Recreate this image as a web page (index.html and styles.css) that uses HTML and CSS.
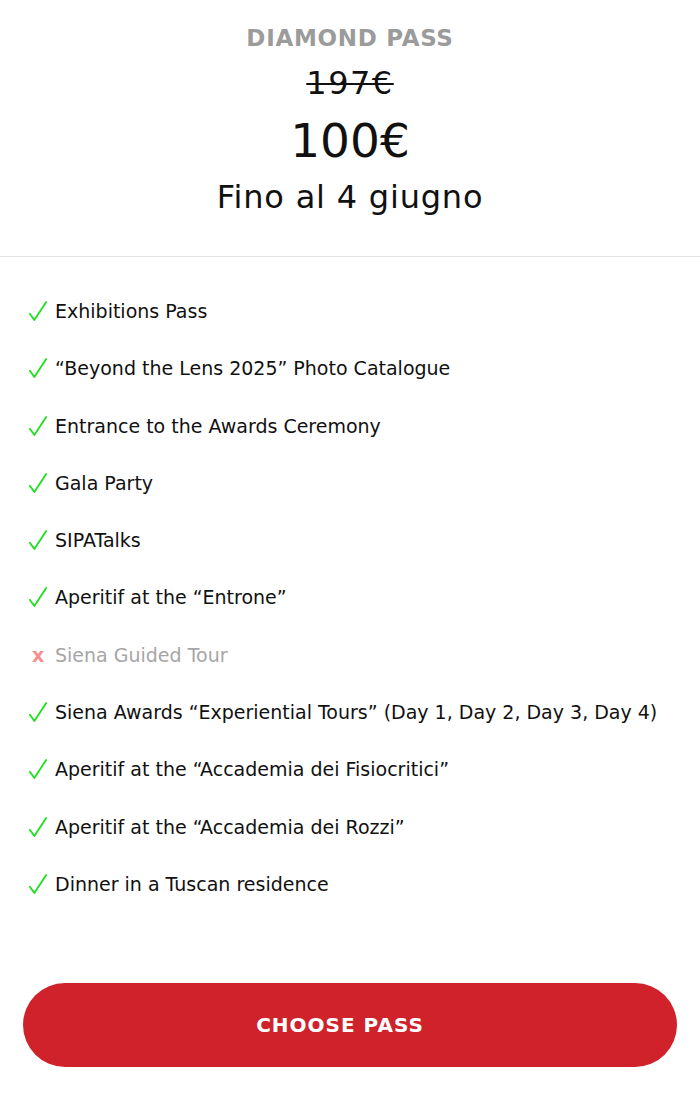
FILE: index.html
```html
<!DOCTYPE html>
<html lang="it">
<head>
<meta charset="utf-8">
<link rel="stylesheet" href="styles.css">
</head>
<body>
<div class="card">
  <header class="head">
    <div class="title">DIAMOND PASS</div>
    <div class="old">197€</div>
    <div class="price">100€</div>
    <div class="until">Fino al 4 giugno</div>
  </header>
  <ul class="features">
    <li><svg class="ok" viewBox="0 0 22 24"><path d="M2 15 L7 22 L20 2"/></svg>Exhibitions Pass</li>
    <li><svg class="ok" viewBox="0 0 22 24"><path d="M2 15 L7 22 L20 2"/></svg>“Beyond the Lens 2025” Photo Catalogue</li>
    <li><svg class="ok" viewBox="0 0 22 24"><path d="M2 15 L7 22 L20 2"/></svg>Entrance to the Awards Ceremony</li>
    <li><svg class="ok" viewBox="0 0 22 24"><path d="M2 15 L7 22 L20 2"/></svg>Gala Party</li>
    <li><svg class="ok" viewBox="0 0 22 24"><path d="M2 15 L7 22 L20 2"/></svg>SIPATalks</li>
    <li><svg class="ok" viewBox="0 0 22 24"><path d="M2 15 L7 22 L20 2"/></svg>Aperitif at the “Entrone”</li>
    <li class="off"><span class="no">x</span>Siena Guided Tour</li>
    <li><svg class="ok" viewBox="0 0 22 24"><path d="M2 15 L7 22 L20 2"/></svg>Siena Awards “Experiential Tours” (Day 1, Day 2, Day 3, Day 4)</li>
    <li><svg class="ok" viewBox="0 0 22 24"><path d="M2 15 L7 22 L20 2"/></svg>Aperitif at the “Accademia dei Fisiocritici”</li>
    <li><svg class="ok" viewBox="0 0 22 24"><path d="M2 15 L7 22 L20 2"/></svg>Aperitif at the “Accademia dei Rozzi”</li>
    <li><svg class="ok" viewBox="0 0 22 24"><path d="M2 15 L7 22 L20 2"/></svg>Dinner in a Tuscan residence</li>
  </ul>
  <div class="cta"><button class="btn">CHOOSE PASS</button></div>
</div>
</body>
</html>
```
FILE: styles.css
```css
html, body {
  margin: 0;
  padding: 0;
  background: #fff;
}
body {
  font-family: "DejaVu Sans", "Liberation Sans", sans-serif;
  color: #111;
}
.card {
  width: 700px;
}
.head {
  display: flex;
  flex-direction: column;
  align-items: center;
  padding-top: 22px;
  padding-bottom: 39px;
  border-bottom: 1px solid #e2e2e2;
}
.title {
  font-size: 23px;
  font-weight: bold;
  color: #9b9b9b;
  line-height: 32px;
  letter-spacing: 0.7px;
}
.old {
  font-size: 32px;
  line-height: 40px;
  margin-top: 9px;
  letter-spacing: 1.5px;
  text-decoration: line-through;
  text-decoration-thickness: 2px;
}
.price {
  font-size: 47px;
  line-height: 60px;
  margin-top: 8px;
}
.until {
  font-size: 32px;
  line-height: 40px;
  margin-top: 6px;
  letter-spacing: 0.8px;
}
.features {
  list-style: none;
  margin: 0;
  padding: 41px 0 0 28px;
  display: flex;
  flex-direction: column;
  gap: 31.3px;
}
.features li {
  display: flex;
  align-items: center;
  font-size: 19px;
  line-height: 26px;
  letter-spacing: 0;
}
.ok {
  width: 20px;
  height: 22px;
  margin-right: 7px;
  fill: none;
  stroke: #1fe01f;
  stroke-width: 2;
  stroke-linecap: round;
  stroke-linejoin: round;
}
.no {
  color: #f59090;
  width: 27px;
  font-weight: bold;
  font-size: 19px;
  padding-left: 4px;
  box-sizing: border-box;
}
.off {
  color: #a6a6a6;
}
.cta {
  padding: 86px 23px 0 23px;
}
.btn {
  width: 654px;
  height: 84px;
  border: none;
  border-radius: 42px;
  background: #d0222a;
  color: #fff;
  font-family: "DejaVu Sans", "Liberation Sans", sans-serif;
  font-weight: bold;
  font-size: 20px;
  letter-spacing: 1px;
  padding-right: 26px;
}
```
